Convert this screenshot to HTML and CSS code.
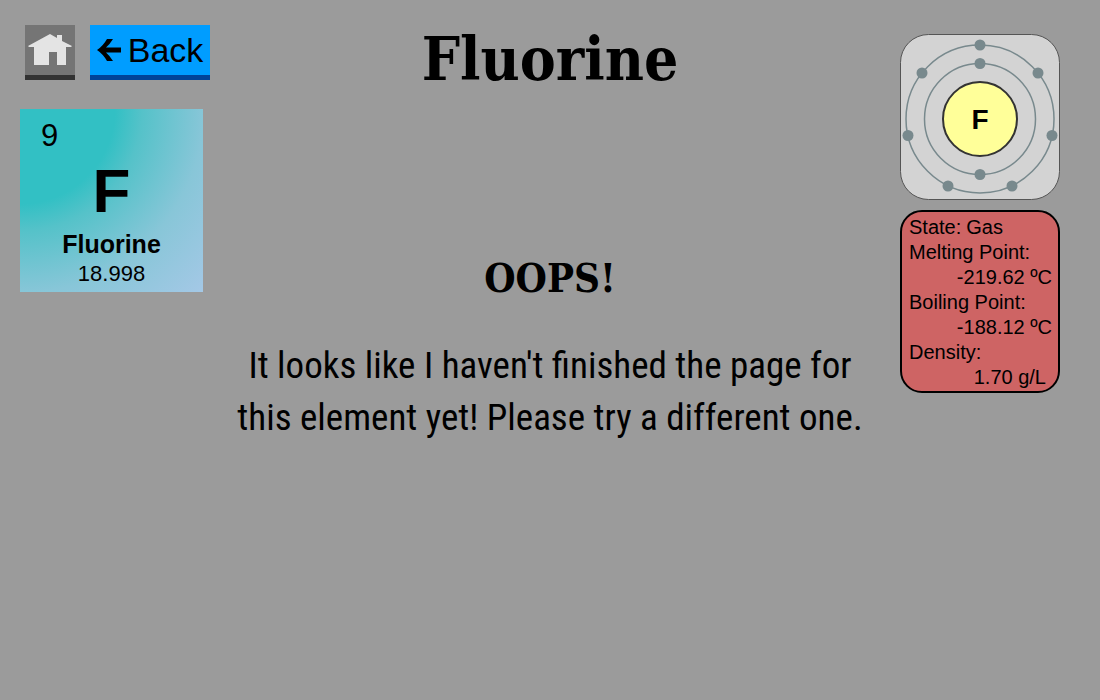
FILE: index.html
```html
<!DOCTYPE html>
<html lang="en">
<head>
<meta charset="utf-8">
<title>Fluorine</title>
<link rel="stylesheet" href="styles.css">
</head>
<body>
<div class="page">
  <div class="side-left">
    <nav class="nav">
      <button class="nav-button home" type="button" aria-label="Home">
        <svg class="home-icon" viewBox="0 0 44 32" aria-hidden="true"><path d="M0 12 22 0 29 4V1H34V7L44 12 43 13H38V31H29V18H21V31H6V13H1Z"/></svg>
      </button>
      <button class="nav-button back" type="button">
        <svg class="back-icon" viewBox="0 0 24 22" aria-hidden="true"><path d="M0 11Q6 7 10 0H16Q13 5 9 8.500H24V13.500H9Q13 17 16 22H10Q6 15 0 11Z"/></svg>
        <span>Back</span>
      </button>
    </nav>
    <section class="tile">
      <span class="tile-number">9</span>
      <span class="tile-symbol">F</span>
      <span class="tile-name">Fluorine</span>
      <span class="tile-mass">18.998</span>
    </section>
  </div>
  <main class="main">
    <h1 class="title">Fluorine</h1>
    <h2 class="oops">OOPS!</h2>
    <p class="message">It looks like I haven't finished the page for this element yet! Please try a different one.</p>
  </main>
  <aside class="side-right">
    <svg class="atom" viewBox="0 0 160 166" role="img" aria-label="Electron shells of fluorine">
      <rect class="atom-card" x=".5" y=".5" width="159" height="165" rx="28"/>
      <circle class="shell" cx="80" cy="85" r="55.5"/>
      <circle class="shell" cx="80" cy="85" r="74"/>
      <circle class="nucleus" cx="80" cy="85" r="37"/>
      <g class="electrons">
        <circle cx="80" cy="29.500" r="5.500"/>
        <circle cx="80" cy="140.500" r="5.500"/>
        <circle cx="80" cy="11" r="5.500"/>
        <circle cx="22" cy="39" r="5.500"/>
        <circle cx="138" cy="39" r="5.500"/>
        <circle cx="8" cy="101.500" r="5.500"/>
        <circle cx="152" cy="101.500" r="5.500"/>
        <circle cx="48" cy="152" r="5.500"/>
        <circle cx="112" cy="152" r="5.500"/>
      </g>
      <text class="atom-symbol" x="80" y="95">F</text>
    </svg>
    <dl class="facts">
      <div class="fact-inline"><dt>State:</dt><dd>Gas</dd></div>
      <dt>Melting Point:</dt><dd class="value">-219.62 ºC</dd>
      <dt>Boiling Point:</dt><dd class="value">-188.12 ºC</dd>
      <dt>Density:</dt><dd class="value density">1.70 g/L</dd>
    </dl>
  </aside>
</div>
</body>
</html>
```
FILE: styles.css
```css
* { box-sizing: border-box; }
body {
  margin: 0;
  background: #9b9b9b;
  color: #000;
  font-family: "Liberation Sans", Arial, sans-serif;
}
.page {
  display: grid;
  grid-template-columns: 200px minmax(0, 1fr) 180px;
  padding: 25px 40px 40px 20px;
}
.nav {
  display: flex;
  gap: 15px;
  padding-left: 5px;
}
.nav-button {
  display: flex;
  align-items: center;
  justify-content: center;
  height: 55px;
  padding: 0;
  border: 0;
  border-bottom: 5px solid #333;
  background: #757575;
  color: #000;
  font: inherit;
  cursor: pointer;
}
.home { width: 50px; }
.home-icon { width: 44px; height: 32px; fill: #e4e4e4; }
.back {
  gap: 7px;
  width: 120px;
  border-bottom-color: #004499;
  background: #009dff;
  font-size: 34px;
}
.back-icon { width: 24px; height: 22px; }
.tile {
  display: flex;
  flex-direction: column;
  align-items: center;
  width: 183px;
  margin-top: 29px;
  padding: 9px 0 5px;
  background: radial-gradient(circle at 0 0, #32c0c4 0, #32c0c4 95px, #55c2c9 122px, #88c6d8 184px, #a4c8e6 258px);
}
.tile-number {
  align-self: flex-start;
  margin-left: 21px;
  font-size: 31px;
  line-height: 36px;
}
.tile-symbol {
  font-size: 62px;
  font-weight: bold;
  line-height: 74px;
}
.tile-name {
  font-size: 25px;
  font-weight: bold;
  line-height: 32px;
}
.tile-mass { font-size: 22px; line-height: 27px; }
.main { text-align: center; }
.title, .oops {
  margin: 0;
  font-family: "Stencil Std", Stencil, "DejaVu Serif Condensed", "DejaVu Serif", serif;
  font-weight: bold;
}
.title { font-size: 60px; line-height: 68px; }
.oops { margin-top: 160px; font-size: 40px; line-height: 50px; }
.message {
  max-width: 640px;
  margin: 37px auto 0;
  font-family: "Roboto Condensed", "Arial Narrow", "Liberation Sans", sans-serif;
  font-size: 37px;
  line-height: 52px;
}
.side-right {
  justify-self: end;
  width: 160px;
  padding-top: 9px;
}
.atom { display: block; width: 100%; }
.atom-card { fill: #d3d3d3; stroke: #555; }
.shell { fill: none; stroke: #78898d; stroke-width: 1.5; }
.nucleus { fill: #ffff99; stroke: #333; stroke-width: 2; }
.electrons { fill: #78898d; }
.atom-symbol { font-size: 28px; font-weight: bold; text-anchor: middle; }
.facts {
  margin: 10px 0 0;
  padding: 3px 6px 1px 7px;
  border: 2px solid #000;
  border-radius: 22px;
  background: #ce6464;
  font-size: 20px;
  line-height: 25px;
}
.fact-inline { display: flex; gap: 5px; }
.facts dd { margin: 0; }
.facts .value { text-align: right; }
.facts .density { padding-right: 6px; }
```
